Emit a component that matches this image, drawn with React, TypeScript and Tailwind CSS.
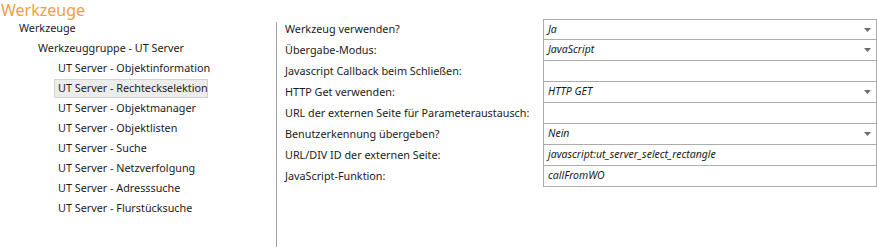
const tools = [
  "UT Server - Objektinformation",
  "UT Server - Rechteckselektion",
  "UT Server - Objektmanager",
  "UT Server - Objektlisten",
  "UT Server - Suche",
  "UT Server - Netzverfolgung",
  "UT Server - Adresssuche",
  "UT Server - Flurstücksuche",
];

const props: { label: string; value: string; select?: boolean }[] = [
  { label: "Werkzeug verwenden?", value: "Ja", select: true },
  { label: "Übergabe-Modus:", value: "JavaScript", select: true },
  { label: "Javascript Callback beim Schließen:", value: "" },
  { label: "HTTP Get verwenden:", value: "HTTP GET", select: true },
  { label: "URL der externen Seite für Parameteraustausch:", value: "" },
  { label: "Benutzerkennung übergeben?", value: "Nein", select: true },
  { label: "URL/DIV ID der externen Seite:", value: "javascript:ut_server_select_rectangle" },
  { label: "JavaScript-Funktion:", value: "callFromWO" },
];

function Caret() {
  return (
    <svg width="7" height="4" viewBox="0 0 7 4" className="shrink-0">
      <path d="M0 0h7L3.5 4z" fill="#6b6b6b" />
    </svg>
  );
}

export default function App() {
  return (
    <div className="h-[247px] w-[877px] overflow-hidden whitespace-nowrap bg-white text-[10.8px] text-[#1b1b1b]" style={{ fontFamily: '"Noto Sans", "Open Sans", sans-serif' }}>
      <h1 className="h-[20px] pl-[1px] pt-[1px] text-[16px] leading-[19px] text-[#f0a040]">Werkzeuge</h1>
      <div className="flex">
        <div className="w-[276px] shrink-0 -mt-[2px]">
          <div className="flex h-[20px] items-center pl-[19px]">Werkzeuge</div>
          <div className="flex h-[20px] items-center pl-[38px]">Werkzeuggruppe - UT Server</div>
          {tools.map((t, i) => (
            <div key={t} className="flex h-[20px] items-center pl-[54px]">
              <span
                className={
                  i === 1
                    ? "flex h-[19px] w-[154px] items-center border border-[#d4d4d4] bg-[#ececec] pl-[3px]"
                    : "flex h-[19px] items-center border border-transparent pl-[3px]"
                }
              >
                {t}
              </span>
            </div>
          ))}
        </div>
        <div className="mt-[2px] h-[225px] w-[1px] shrink-0 bg-[#a0a0a0]" />
        <div className="-mt-[1px] flex-1 pl-[8px]">
          {props.map((p, i) => (
            <div key={p.label} className="flex h-[21px]">
              <div className="flex w-[258px] shrink-0 items-center">{p.label}</div>
              <div
                className={
                  "flex w-[334px] items-center justify-between border-x border-b border-[#acacac] pl-[4px] pr-[5px] italic text-[10.5px] " +
                  (i === 0 ? "border-t" : "")
                }
              >
                <span>{p.value}</span>
                {p.select && <Caret />}
              </div>
            </div>
          ))}
        </div>
      </div>
    </div>
  );
}
